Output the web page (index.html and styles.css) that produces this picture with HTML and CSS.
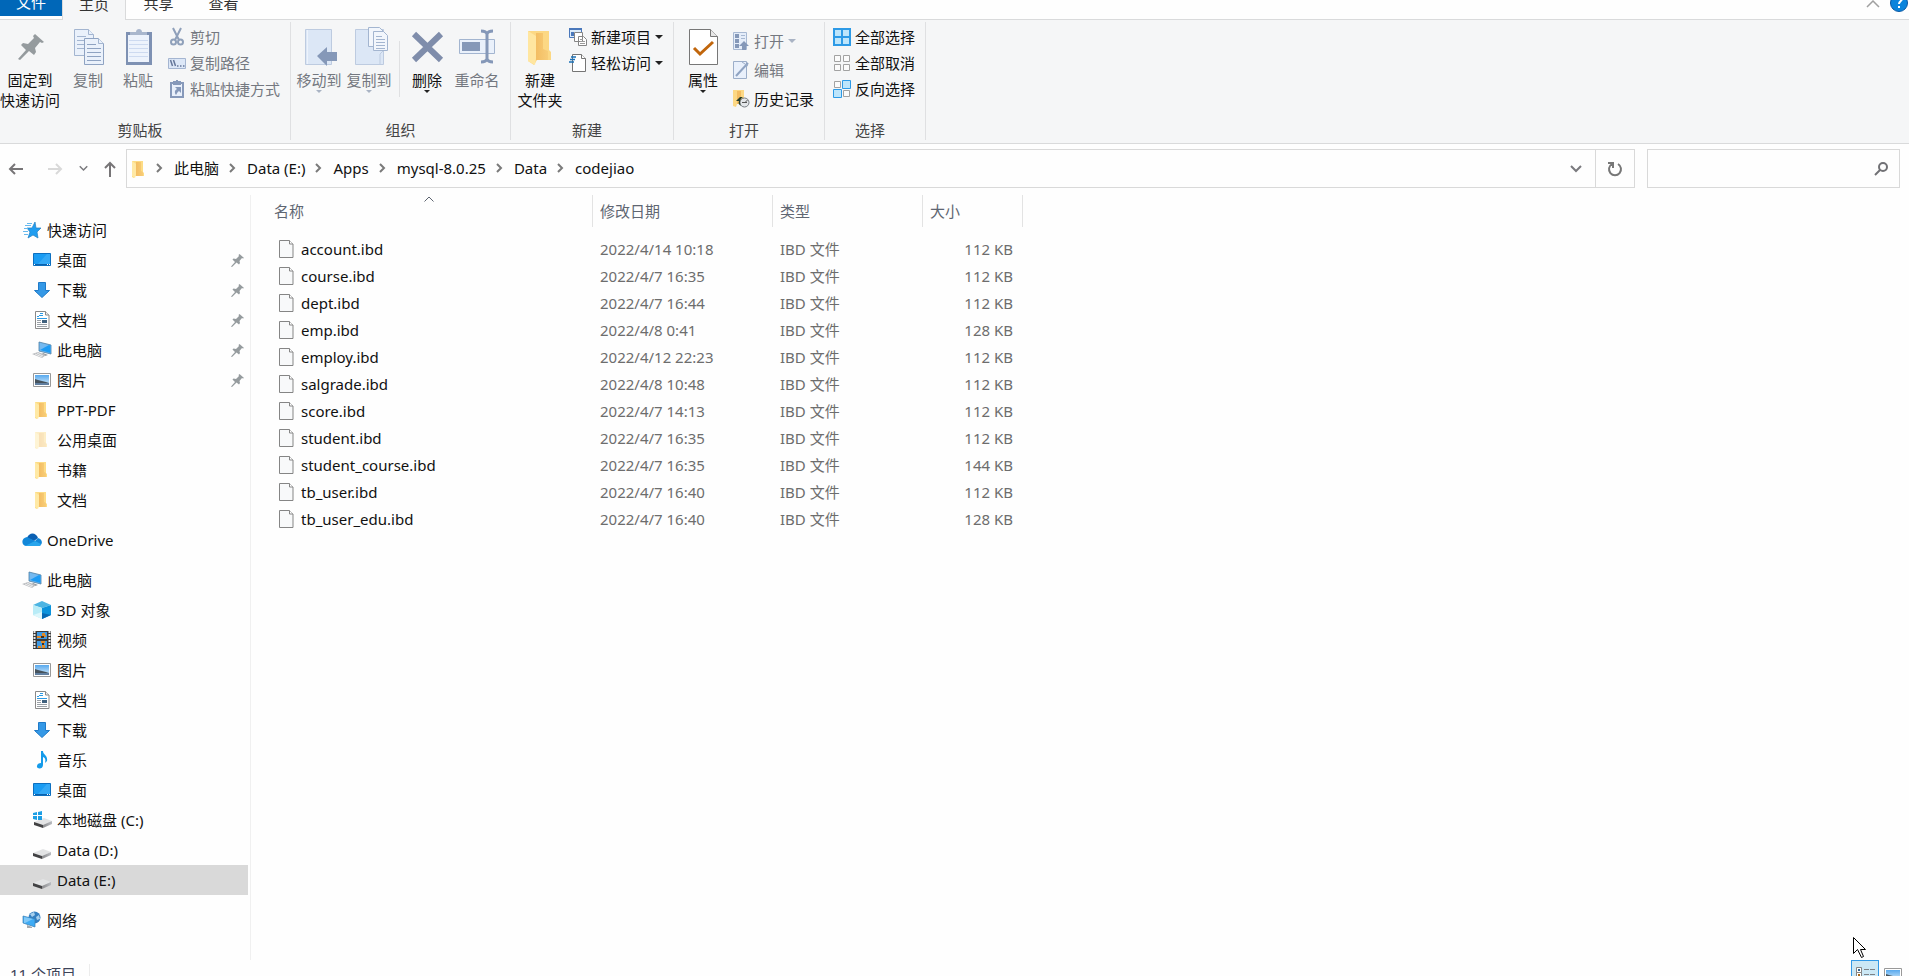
FILE: index.html
```html
<!DOCTYPE html>
<html lang="zh-CN">
<head>
    <meta charset="UTF-8">
    <meta name="viewport" content="width=device-width, initial-scale=1.0">
    <title>codejiao</title>
    <link rel="stylesheet" href="styles.css">
</head>
<body>
    <!-- shared icons -->
    <svg class="sprite" aria-hidden="true">
        <defs>
            <linearGradient id="g-gold" x1="0" x2="1"><stop offset="0" stop-color="#f3bd62"/><stop offset="1" stop-color="#f8cd78"/></linearGradient>
            <linearGradient id="g-sky" x1="0" y1="0" x2="0" y2="1"><stop offset="0" stop-color="#58a9ee"/><stop offset="1" stop-color="#d6ecfb"/></linearGradient>
            <linearGradient id="g-drive" x1="0" x2="1"><stop offset="0" stop-color="#8b8b8d"/><stop offset="1" stop-color="#b9bcc1"/></linearGradient>
        </defs>
        <symbol id="i-pin" viewBox="0 0 26 26">
            <path fill="#959b9e" d="M17 0l9 8-2 1-2-1-5 6 1 4-2 3-5-4L2 26l-2-1 8-9-5-5 2-2 5 1 6-6-1-2z"/>
        </symbol>
        <symbol id="i-folder" viewBox="0 0 18 18">
            <path fill="#fddc85" d="M2 1h11v11l1 1v3H5l-1 2-2-1z"/>
            <path fill="url(#g-gold)" d="M6 2h5v9l2 1v4H6z"/>
            <path fill="#ffe9a5" d="M2 1l4 3v11l-1 3-3-2z"/>
        </symbol>
        <symbol id="i-chev" viewBox="0 0 10 10">
            <path fill="none" stroke="#7a7a7a" stroke-width="2" d="M3 1l4 4-4 4"/>
        </symbol>
        <symbol id="i-down" viewBox="0 0 12 12">
            <path fill="none" stroke="#7a7a7e" stroke-width="2" d="M1 3l5 5 5-5"/>
        </symbol>
        <symbol id="i-file" viewBox="0 0 15 18">
            <path fill="#f8f9fa" stroke="#858585" d="M.5 .5h10l3.500 3.500v13.500H.5z"/>
            <path fill="#fff" stroke="#858585" d="M10.500 .5v3.500h3.500"/>
        </symbol>
        <symbol id="i-desktop" viewBox="0 0 18 18">
            <path fill="#1a9cf3" stroke="#0d6fbf" d="M.5 2.500h17v12H.5z"/>
            <path fill="#35a9f6" d="M4 14L14 3h3v11z"/>
            <path fill="#0a61ad" d="M1 13h16v1H1z"/>
            <path fill="#fff" d="M1 13h1v1H1zM14 13h1v1h-1zM16 13h1v1h-1z"/>
        </symbol>
        <symbol id="i-download" viewBox="0 0 18 18">
            <path fill="#3498e6" stroke="#1f7ac8" d="M5.500 1.500h7v8h4L9 16.500 1.500 9.500h4z"/>
        </symbol>
        <symbol id="i-doc" viewBox="0 0 18 18">
            <path fill="#fff" stroke="#8a8a8a" d="M2.500 .5h10l3.500 3.500v13.500H2.500z"/>
            <path fill="#eee" stroke="#8a8a8a" d="M12.500 .5v3.500h3.500"/>
            <path stroke="#2b9be6" d="M7 2.500h3M6 4.500h4M4 5.500h2M4 7.500h10"/>
            <path stroke="#9aa0a6" d="M4 9.500h4M4 11.500h4M4 13.500h10M4 15.500h10"/>
            <path fill="#41627f" d="M9 9h5v3H9z"/>
        </symbol>
        <symbol id="i-pc" viewBox="0 0 20 18">
            <path fill="#74b9f0" stroke="#4d7fa5" stroke-width=".8" d="M7 1l12 3v9L7 10z"/>
            <path fill="#1d9bf4" d="M8 9l9-5 1.500 .5v7.500z"/>
            <path fill="#8b9299" d="M11 12l5 2-3 1-3-2z"/>
            <path fill="#b9bcc0" d="M0 13l6-2 8 3-4 3z"/>
            <path stroke="#eee" d="M3 13l7 3M5 12l6 3"/>
        </symbol>
        <symbol id="i-picture" viewBox="0 0 18 18">
            <path fill="#fff" stroke="#999" d="M.5 2.500h17v13H.5z"/>
            <path fill="url(#g-sky)" d="M2 4h14v10H2z"/>
            <path fill="#46535d" d="M2 8l3 1 4 1 4 1 3 1v1H2z"/>
            <path fill="#607fa0" d="M2 12h14v2H2z"/>
        </symbol>
        <symbol id="i-cube" viewBox="0 0 18 18">
            <path fill="#4cb4e2" d="M0 4l9-4 9 4-9 3z"/>
            <path fill="#b9ecf7" d="M0 4l9 3v11l-9-4z"/>
            <path fill="#0b93dc" d="M18 4L9 7v11l9-4z"/>
            <path fill="#0569b4" d="M9 12l9 2-9 4z"/>
            <path fill="#def7fb" d="M0 14l9-3v7z"/>
        </symbol>
        <symbol id="i-video" viewBox="0 0 18 18">
            <path fill="#3b3b3b" d="M0 0h18v18H0z"/>
            <path stroke="#e8e8e8" stroke-width="2" stroke-dasharray="2 1" d="M1.500 0v18M16.500 0v18"/>
            <path fill="#3f9ae5" d="M4 1h10v7H4zM4 10h10v7H4z"/>
            <path fill="#e28a26" d="M9 2h3v2h1v2H9zM4 5h4v2H4zM8 10h4v2H8zM5 15h3v2H5zM9 14h3v3H9z"/>
            <path fill="#3b3027" d="M8 5h3v2H8zM9 12h2v2H9z"/>
        </symbol>
        <symbol id="i-music" viewBox="0 0 18 18">
            <path fill="#159bea" d="M8 0h2c0 4 5 4 4 10l-2 2c1-4 0-5-2-6v8c0 5-7 4-6 1 0-2 2-3 4-3z"/>
        </symbol>
        <symbol id="i-drive" viewBox="0 0 18 18">
            <path fill="#e3e4e5" d="M0 12l10-4 8 3-9 4z"/>
            <path fill="#424244" d="M0 12l9 3v3l-9-3z"/>
            <path fill="url(#g-drive)" d="M9 15l9-4v3l-9 4z"/>
        </symbol>
        <symbol id="i-osdrive" viewBox="0 0 20 18">
            <path fill="#e3e4e5" d="M2 11l10-4 8 3-9 5z"/>
            <path fill="#424244" d="M2 11l9 3v3l-9-3z"/>
            <path fill="url(#g-drive)" d="M11 14l9-4v3l-9 4z"/>
            <path fill="#1b9ee5" d="M1 2l4-1v3H1zM6 1l4-1v4H6zM1 5h4v4l-4-1zM6 5h4v4H6z"/>
        </symbol>
        <symbol id="i-star" viewBox="0 0 20 18">
            <path fill="#209df0" stroke="#2380c1" stroke-width=".7" d="M13 1l1 6h5l-4 4 1 6-5-3-5 3 2-6-3-4h5z"/>
            <path stroke="#67b9ee" d="M5 2.500h5M3 4.500h6M2 7.500h4M1 10.500h5M2 13.500h4"/>
        </symbol>
        <symbol id="i-cloud" viewBox="0 0 20 14">
            <path fill="#0a5fb2" d="M5 5c2-6 9-6 11 0l-4 3z"/>
            <path fill="#1287d9" d="M4 13C-1 12-1 5 5 4l8 4 3-3c5 1 5 7 1 8z"/>
            <path fill="#28a5ec" d="M3 13l10-5 6 3c0 1-1 2-2 2z"/>
        </symbol>
        <symbol id="i-network" viewBox="0 0 18 18">
            <circle cx="11.500" cy="6.500" r="6" fill="#347fc1"/>
            <path fill="#a7d0ee" d="M7 3l4-2 1 3-3 2zM13 6l3-2 1 4-3 1z"/>
            <path fill="#3dabf5" stroke="#3b7fb5" stroke-width=".7" d="M0 5l12 3v8L0 12z"/>
            <path fill="#81c8f7" d="M1 6l9 2-8 4H1z"/>
            <path fill="#a3a9ae" d="M4 14l5 2v1H4z"/>
        </symbol>
    </svg>

    <div class="window">
        <header class="tabs">
            <button class="tab tab-file">文件</button>
            <button class="tab tab-active">主页</button>
            <button class="tab">共享</button>
            <button class="tab">查看</button>
            <div class="tab-tools">
                <button aria-label="最小化功能区">
                    <svg width="14" height="10" viewBox="0 0 14 10"><path fill="none" stroke="#a0a0a0" stroke-width="1.500" d="M1 9l6-6 6 6"/></svg>
                </button>
                <button aria-label="帮助">
                    <svg width="18" height="18" viewBox="0 0 18 18"><circle cx="9" cy="9" r="8.500" fill="#0a84dc" stroke="#0757a4"/><path fill="none" stroke="#fff" stroke-width="2" d="M6 6c0-4 6-4 6-1 0 2-3 2-3 5"/><path fill="#fff" d="M8 12h2v2H8z"/></svg>
                </button>
            </div>
        </header>

        <section class="ribbon">
            <div class="group">
                <div class="tools">
                    <button class="big w60">
                        <svg width="36" height="38" viewBox="0 0 36 38"><use href="#i-pin" x="6" y="6" width="26" height="26"/></svg>
                        <span>固定到<br>快速访问</span>
                    </button>
                    <button class="big w56" disabled>
                        <svg width="36" height="38" viewBox="0 0 36 38">
                            <g fill="#eaf1fb" stroke="#a3b5d0">
                                <path d="M4.500 1.500h14l5 5v21h-19z"/><path d="M18.500 1.500v5h5"/>
                                <path d="M7 8.500h9M7 12.500h9M7 16.500h9M7 20.500h9"/>
                                <path stroke="#8fa3c2" d="M14.500 10.500h14l5 5v21h-19z"/><path d="M28.500 10.500v5h5"/>
                                <path stroke="#8fa3c2" d="M17 16.500h9M17 20.500h14M17 24.500h14M17 28.500h14M17 32.500h14"/>
                            </g>
                        </svg>
                        <span>复制</span>
                    </button>
                    <button class="big w44" disabled>
                        <svg width="36" height="38" viewBox="0 0 36 38">
                            <path fill="#7e91b3" d="M6 4h26v33H6z"/><path fill="#edf3fc" d="M8 7h21v27H8z"/>
                            <path stroke="#cddaf0" d="M9 12.500h19M9 16.500h19M9 20.500h19M9 24.500h19M9 28.500h19"/>
                            <path fill="#a9b7cd" d="M10 4h6c0-4 6-4 6 0h5v3H10z"/>
                        </svg>
                        <span>粘贴</span>
                    </button>
                    <div class="small-list indent">
                        <button class="small" disabled>
                            <svg width="18" height="18" viewBox="0 0 18 18"><path fill="none" stroke="#8fa0ba" stroke-width="2" d="M5 0l6 12M13 0L7 12"/><circle cx="5.500" cy="14" r="2.500" fill="none" stroke="#8fa0ba" stroke-width="2"/><circle cx="12.500" cy="14" r="2.500" fill="none" stroke="#8fa0ba" stroke-width="2"/></svg>
                            剪切
                        </button>
                        <button class="small" disabled>
                            <svg width="18" height="18" viewBox="0 0 18 18"><path fill="#dce7f7" stroke="#a4b5d1" d="M.5 4.500h17v10H.5z"/><path stroke="#65779a" stroke-width="1.500" d="M2.500 6l2 6M5.500 6l2 6M9 12h1.500M12 12h1.500M15 12h1.500"/></svg>
                            复制路径
                        </button>
                        <button class="small" disabled>
                            <svg width="18" height="18" viewBox="0 0 18 18"><path fill="#e9f0fb" stroke="#8699ba" stroke-width="2" d="M3 3h12v14H3z"/><path fill="#8699ba" d="M5 1h8v4H5zM8 0h2v1H8zM7 7h6v6l-2-2c-2 1-2 3-3 4-2-3-1-5 1-6z"/></svg>
                            粘贴快捷方式
                        </button>
                    </div>
                </div>
                <h2>剪贴板</h2>
            </div>

            <div class="group group-organize">
                <div class="tools">
                    <button class="big w50" disabled>
                        <svg width="36" height="38" viewBox="0 0 36 38"><path fill="#dce7f6" stroke="#bdcbe0" d="M4.500 1.500h26v35h-26z"/><path stroke="#edf3fc" d="M6.500 2v34"/><path fill="#8598b8" d="M16 28l10-9v5h10v9H26v5z"/></svg>
                        <span>移动到</span><i class="caret"></i>
                    </button>
                    <button class="big w50" disabled>
                        <svg width="36" height="38" viewBox="0 0 36 38"><path fill="#dce7f6" stroke="#bdcbe0" d="M4.500 1.500h28v35h-28zM29 36V26l3-3"/><g fill="#f2f6fc" stroke="#a3b5d0"><path d="M17.500 -.5h11l4 4v15h-15z"/><path d="M22.500 3.500h10l4 4v15h-14z"/><path d="M25 8.500h6M25 11.500h9M25 14.500h9M25 17.500h9M25 20.500h9"/></g></svg>
                        <span>复制到</span><i class="caret"></i>
                    </button>
                    <div class="split"></div>
                    <button class="big w40">
                        <svg width="36" height="38" viewBox="0 0 36 38"><path fill="none" stroke="#7f8dab" stroke-width="6" d="M5 6l27 26M32 6L5 32"/></svg>
                        <span>删除</span><i class="caret"></i>
                    </button>
                    <button class="big w60" disabled>
                        <svg width="36" height="38" viewBox="0 0 36 38"><path fill="#eaf1fb" stroke="#a3b5d0" d="M.5 11.500h35v14H.5z"/><path fill="#8598b8" d="M3 14h18v9H3z"/><path fill="none" stroke="#8598b8" stroke-width="3" d="M28 5v27M22 3q5 0 6 3 1-3 6-3M22 34q5 0 6-3 1 3 6 3"/></svg>
                        <span>重命名</span>
                    </button>
                </div>
                <h2>组织</h2>
            </div>

            <div class="group">
                <div class="tools">
                    <button class="big w58">
                        <svg width="36" height="38" viewBox="0 0 36 38"><path fill="#fcd884" d="M6 3h21v19l2 2v8H15l-3 5-6-4z"/><path fill="url(#g-gold)" d="M14 5h7v16l5 2v9H14z"/><path fill="#ffe6a0" d="M6 3l8 5v22l-1 7-7-4z"/></svg>
                        <span>新建<br>文件夹</span>
                    </button>
                    <div class="small-list">
                        <button class="small">
                            <svg width="18" height="18" viewBox="0 0 18 18"><path fill="#dcecfb" stroke="#4a78bb" d="M.5 .5h12v9H.5z"/><path fill="#4a78bb" d="M0 0h13v2H0zM2 4h3v4H2z"/><path fill="#fff" stroke="#858585" d="M5.500 4.500h8v9h-8zM9.500 8.500h5l3 3v6h-8z"/><path stroke="#9b9b9b" d="M11 11.500h3M11 13.500h5M11 15.500h5"/></svg>
                            新建项目<i class="caret"></i>
                        </button>
                        <button class="small">
                            <svg width="18" height="18" viewBox="0 0 18 18"><path fill="#fff" stroke="#757575" d="M3.500 .5h9l4 4v13h-13z"/><path fill="#fff" stroke="#757575" d="M12.500 .5v4h4"/><path stroke="#1b71b8" stroke-width="1.500" d="M2 3h5M1 5.500h5M0 8h5"/></svg>
                            轻松访问<i class="caret"></i>
                        </button>
                    </div>
                </div>
                <h2>新建</h2>
            </div>

            <div class="group">
                <div class="tools">
                    <button class="big w58">
                        <svg width="36" height="38" viewBox="0 0 36 38"><path fill="#fff" stroke="#777" d="M4.500 1.500h21l7 7v28h-28z"/><path fill="#e7e7e7" stroke="#777" d="M25.500 1.500v7h7"/><path fill="none" stroke="#c1660c" stroke-width="3" d="M9 20l6 6 13-12"/></svg>
                        <span>属性</span><i class="caret"></i>
                    </button>
                    <div class="small-list loose">
                        <button class="small" disabled>
                            <svg width="18" height="18" viewBox="0 0 18 18"><path fill="#e5edf9" stroke="#a7b8d2" d="M1.500 .5h13v17h-13z"/><path fill="#8598b8" d="M3 2h4v4H3zM3 7h4v4H3zM3 12h4v4H3zM7 14l5-5 5 5h-3v4h-4v-4z"/><path stroke="#a7b8d2" d="M9 3.500h4M9 6.500h4"/></svg>
                            打开<i class="caret"></i>
                        </button>
                        <button class="small" disabled>
                            <svg width="18" height="18" viewBox="0 0 18 18"><path fill="#e9f0fb" stroke="#9caec9" d="M1.500 .5h13v17h-13z"/><path stroke="#8fa3c2" stroke-width="2" d="M4 15L16 2"/><path stroke="#9caec9" d="M10 1l6 4"/></svg>
                            编辑
                        </button>
                        <button class="small">
                            <svg width="18" height="18" viewBox="0 0 18 18"><path fill="#fcd884" d="M1 0h11v14H5l-1 3-3-1z"/><path fill="#f3bd62" d="M5 1h4v13H5z"/><circle cx="12.500" cy="12.500" r="4.500" fill="#e3e6e9" stroke="#777d83"/><path fill="none" stroke="#555" d="M12.500 13l3-3M10 12.500h5"/><path fill="#263d2b" d="M11 7c-3 2-4 5-2 9-2-1-3-3-2-5H4l4-4z"/></svg>
                            历史记录
                        </button>
                    </div>
                </div>
                <h2>打开</h2>
            </div>

            <div class="group">
                <div class="tools">
                    <div class="small-list indent">
                        <button class="small">
                            <svg width="18" height="18" viewBox="0 0 18 18"><path fill="#bde5fb" stroke="#2d9ae6" stroke-width="2" d="M1 1h16v16H1zM9 1v16M1 9h16"/></svg>
                            全部选择
                        </button>
                        <button class="small">
                            <svg width="18" height="18" viewBox="0 0 18 18"><path fill="#fbfbfb" stroke="#a2a2a2" d="M1.500 1.500h6v6h-6zM10.500 1.500h6v6h-6zM1.500 10.500h6v6h-6zM10.500 10.500h6v6h-6z"/></svg>
                            全部取消
                        </button>
                        <button class="small">
                            <svg width="18" height="18" viewBox="0 0 18 18"><path fill="#fbfbfb" stroke="#a2a2a2" d="M1.500 1.500h6v6h-6zM10.500 10.500h6v6h-6z"/><path fill="#bde5fb" stroke="#2d9ae6" d="M9.500 .5h8v8h-8zM.5 9.500h8v8h-8z"/></svg>
                            反向选择
                        </button>
                    </div>
                </div>
                <h2>选择</h2>
            </div>
        </section>

        <nav class="address-row">
            <div class="history">
                <button aria-label="返回"><svg width="16" height="12" viewBox="0 0 16 12"><path fill="none" stroke="#777577" stroke-width="2" d="M15 6H2M7 1L2 6l5 5"/></svg></button>
                <button aria-label="前进"><svg width="16" height="12" viewBox="0 0 16 12"><path fill="none" stroke="#d9d9d9" stroke-width="2" d="M1 6h13M9 1l5 5-5 5"/></svg></button>
                <button aria-label="最近位置"><svg width="9" height="9"><use href="#i-down"/></svg></button>
                <button aria-label="向上"><svg width="12" height="16" viewBox="0 0 12 16"><path fill="none" stroke="#777577" stroke-width="2" d="M6 16V2M1 7l5-5 5 5"/></svg></button>
            </div>
            <div class="address">
                <svg class="address-icon" width="16" height="18" viewBox="0 0 16 18"><use href="#i-folder" width="18" height="18"/></svg>
                <ol class="crumbs">
                    <li><svg width="10" height="10"><use href="#i-chev"/></svg><a href="#">此电脑</a></li>
                    <li><svg width="10" height="10"><use href="#i-chev"/></svg><a href="#">Data (E:)</a></li>
                    <li><svg width="10" height="10"><use href="#i-chev"/></svg><a href="#">Apps</a></li>
                    <li><svg width="10" height="10"><use href="#i-chev"/></svg><a href="#">mysql-8.0.25</a></li>
                    <li><svg width="10" height="10"><use href="#i-chev"/></svg><a href="#">Data</a></li>
                    <li><svg width="10" height="10"><use href="#i-chev"/></svg><a href="#">codejiao</a></li>
                </ol>
                <button class="address-btn" aria-label="以前的位置"><svg width="12" height="12"><use href="#i-down"/></svg></button>
                <button class="address-btn refresh" aria-label="刷新"><svg width="16" height="16" viewBox="0 0 16 16"><path fill="none" stroke="#777" stroke-width="2" d="M11 3a6 6 0 1 1-6 0M1 2h5v5"/></svg></button>
            </div>
            <div class="search">
                <input type="search" aria-label="搜索">
                <svg width="14" height="14" viewBox="0 0 14 14"><circle cx="9" cy="5" r="4" fill="none" stroke="#717175" stroke-width="2"/><path stroke="#717175" stroke-width="2" d="M6 8l-5 5"/></svg>
            </div>
        </nav>

        <main class="main">
            <aside class="sidebar">
                <section>
                    <a class="root" href="#"><svg width="20" height="18"><use href="#i-star"/></svg>快速访问</a>
                    <a href="#"><svg width="20" height="18"><use href="#i-desktop"/></svg>桌面<svg class="pinned" width="13" height="13"><use href="#i-pin"/></svg></a>
                    <a href="#"><svg width="20" height="18"><use href="#i-download"/></svg>下载<svg class="pinned" width="13" height="13"><use href="#i-pin"/></svg></a>
                    <a href="#"><svg width="20" height="18"><use href="#i-doc"/></svg>文档<svg class="pinned" width="13" height="13"><use href="#i-pin"/></svg></a>
                    <a href="#"><svg width="20" height="18"><use href="#i-pc"/></svg>此电脑<svg class="pinned" width="13" height="13"><use href="#i-pin"/></svg></a>
                    <a href="#"><svg width="20" height="18"><use href="#i-picture"/></svg>图片<svg class="pinned" width="13" height="13"><use href="#i-pin"/></svg></a>
                    <a href="#"><svg width="20" height="18"><use href="#i-folder"/></svg>PPT-PDF</a>
                    <a href="#"><svg class="faded" width="20" height="18"><use href="#i-folder"/></svg>公用桌面</a>
                    <a href="#"><svg width="20" height="18"><use href="#i-folder"/></svg>书籍</a>
                    <a href="#"><svg width="20" height="18"><use href="#i-folder"/></svg>文档</a>
                </section>
                <section>
                    <a class="root" href="#"><svg width="20" height="14"><use href="#i-cloud"/></svg>OneDrive</a>
                </section>
                <section>
                    <a class="root" href="#"><svg width="20" height="18"><use href="#i-pc"/></svg>此电脑</a>
                    <a href="#"><svg width="20" height="18"><use href="#i-cube"/></svg>3D 对象</a>
                    <a href="#"><svg width="20" height="18"><use href="#i-video"/></svg>视频</a>
                    <a href="#"><svg width="20" height="18"><use href="#i-picture"/></svg>图片</a>
                    <a href="#"><svg width="20" height="18"><use href="#i-doc"/></svg>文档</a>
                    <a href="#"><svg width="20" height="18"><use href="#i-download"/></svg>下载</a>
                    <a href="#"><svg width="20" height="18"><use href="#i-music"/></svg>音乐</a>
                    <a href="#"><svg width="20" height="18"><use href="#i-desktop"/></svg>桌面</a>
                    <a href="#"><svg width="20" height="18"><use href="#i-osdrive"/></svg>本地磁盘 (C:)</a>
                    <a href="#"><svg width="20" height="18"><use href="#i-drive"/></svg>Data (D:)</a>
                    <a class="selected" href="#"><svg width="20" height="18"><use href="#i-drive"/></svg>Data (E:)</a>
                </section>
                <section>
                    <a class="root" href="#"><svg width="20" height="18"><use href="#i-network"/></svg>网络</a>
                </section>
            </aside>

            <div class="files">
                <table>
                    <colgroup><col class="col-name"><col class="col-date"><col class="col-type"><col class="col-size"></colgroup>
                    <thead>
                        <tr>
                            <th>名称<svg class="sort" width="10" height="6" viewBox="0 0 10 6"><path fill="none" stroke="#5d6470" d="M.5 5.500L5 1l4.500 4.500"/></svg></th>
                            <th>修改日期</th>
                            <th>类型</th>
                            <th>大小</th>
                        </tr>
                    </thead>
                    <tbody>
                        <tr><td><svg width="15" height="18"><use href="#i-file"/></svg>account.ibd</td><td>2022/4/14 10:18</td><td>IBD 文件</td><td>112 KB</td></tr>
                        <tr><td><svg width="15" height="18"><use href="#i-file"/></svg>course.ibd</td><td>2022/4/7 16:35</td><td>IBD 文件</td><td>112 KB</td></tr>
                        <tr><td><svg width="15" height="18"><use href="#i-file"/></svg>dept.ibd</td><td>2022/4/7 16:44</td><td>IBD 文件</td><td>112 KB</td></tr>
                        <tr><td><svg width="15" height="18"><use href="#i-file"/></svg>emp.ibd</td><td>2022/4/8 0:41</td><td>IBD 文件</td><td>128 KB</td></tr>
                        <tr><td><svg width="15" height="18"><use href="#i-file"/></svg>employ.ibd</td><td>2022/4/12 22:23</td><td>IBD 文件</td><td>112 KB</td></tr>
                        <tr><td><svg width="15" height="18"><use href="#i-file"/></svg>salgrade.ibd</td><td>2022/4/8 10:48</td><td>IBD 文件</td><td>112 KB</td></tr>
                        <tr><td><svg width="15" height="18"><use href="#i-file"/></svg>score.ibd</td><td>2022/4/7 14:13</td><td>IBD 文件</td><td>112 KB</td></tr>
                        <tr><td><svg width="15" height="18"><use href="#i-file"/></svg>student.ibd</td><td>2022/4/7 16:35</td><td>IBD 文件</td><td>112 KB</td></tr>
                        <tr><td><svg width="15" height="18"><use href="#i-file"/></svg>student_course.ibd</td><td>2022/4/7 16:35</td><td>IBD 文件</td><td>144 KB</td></tr>
                        <tr><td><svg width="15" height="18"><use href="#i-file"/></svg>tb_user.ibd</td><td>2022/4/7 16:40</td><td>IBD 文件</td><td>112 KB</td></tr>
                        <tr><td><svg width="15" height="18"><use href="#i-file"/></svg>tb_user_edu.ibd</td><td>2022/4/7 16:40</td><td>IBD 文件</td><td>128 KB</td></tr>
                    </tbody>
                </table>
            </div>
        </main>

        <footer class="status">
            <span class="count">11 个项目</span>
            <div class="views">
                <button class="view view-on" aria-label="详细信息">
                    <svg width="20" height="20" viewBox="0 0 20 20"><path fill="#fff" stroke="#858585" d="M1.500 .5h5v5h-5zM1.500 5.500h5v5h-5zM1.500 10.500h5v5h-5z"/><path fill="#33658f" d="M3 2h2v2H3zM3 12h2v2H3z"/><path fill="#a9691b" d="M3 7h2v2H3z"/><path stroke="#7d8185" d="M9 2.500h5M15 2.500h5M9 7.500h5M15 7.500h5M9 12.500h5M15 12.500h5"/></svg>
                </button>
                <button class="view" aria-label="大图标">
                    <svg width="18" height="18"><use href="#i-picture"/></svg>
                </button>
            </div>
        </footer>

        <svg class="pointer" width="13" height="22" viewBox="0 0 13 22"><path fill="#fff" stroke="#000" d="M.5 .5v16l4-4 4 8 2-1-3-7h5z"/></svg>
    </div>
</body>
</html>
```

FILE: styles.css
```css
* {
    box-sizing: border-box;
}

body {
    margin: 0;
    font-family: "Noto Sans", "Noto Sans CJK SC", sans-serif;
    font-size: 15px;
    line-height: 20px;
    color: #111;
    background: #fefefe;
}

button {
    padding: 0;
    border: 0;
    background: none;
    font: inherit;
    color: inherit;
}

a {
    color: inherit;
    text-decoration: none;
}

svg {
    flex: none;
    overflow: visible;
}

.sprite {
    position: absolute;
    width: 0;
    height: 0;
}

.window {
    position: relative;
    display: flex;
    flex-direction: column;
    height: 100vh;
    overflow: hidden;
}

/* tabs, scrolled partly out of the top */
.tabs {
    display: flex;
    align-items: flex-end;
    height: 20px;
    border-bottom: 1px solid #d9dadb;
}

.tab {
    width: 65px;
    height: 32px;
    color: #333;
}

.tab-file {
    width: 62px;
    height: 29px;
    margin-bottom: 3px;
    background: #0067b8;
    color: #fff;
}

.tab-active {
    width: 64px;
    height: 33px;
    margin-bottom: -1px;
    border: 1px solid #d9dadb;
    border-bottom: 0;
    background: #f5f6f7;
}

.tab-tools {
    display: flex;
    align-items: flex-end;
    gap: 10px;
    margin-left: auto;
    padding: 0 1px 7px 0;
}

.tab-tools button {
    display: flex;
    height: 18px;
    align-items: center;
}

/* ribbon */
.ribbon {
    display: flex;
    flex: none;
    height: 124px;
    padding: 2px 0 3px;
    background: #f5f6f7;
    border-bottom: 1px solid #d9dadb;
}

.group {
    display: flex;
    flex-direction: column;
    justify-content: space-between;
    padding-right: 10px;
    border-right: 1px solid #dfe0e2;
}

.group h2 {
    margin: 0;
    font-size: 15px;
    font-weight: 400;
    text-align: center;
    color: #444;
}

.group-organize {
    padding: 0 3px;
}

.tools {
    display: flex;
    align-items: flex-start;
}

.big {
    display: flex;
    flex-direction: column;
    align-items: center;
    padding-top: 6px;
    white-space: nowrap;
}

.big svg {
    margin-bottom: 4px;
}

.w40 { width: 40px; }
.w44 { width: 44px; }
.w50 { width: 50px; }
.w56 { width: 56px; }
.w58 { width: 58px; }
.w60 { width: 60px; }

button:disabled {
    color: #747880;
}

.caret {
    border: 3px solid transparent;
    border-top-color: #222;
    border-bottom: 0;
}

button:disabled .caret {
    border-top-color: #a9b3c4;
}

.split {
    height: 56px;
    margin: 19px 7px 0 5px;
    border-left: 1px solid #dfe0e2;
}

.small-list {
    display: flex;
    flex-direction: column;
    padding-top: 2px;
}

.indent {
    padding-left: 8px;
}

.small {
    display: flex;
    align-items: center;
    gap: 4px;
    height: 26px;
}

.small .caret {
    border-width: 4px 4px 0;
}

.loose {
    padding-top: 4px;
}

.loose .small {
    height: 29px;
}

/* address bar */
.address-row {
    display: flex;
    flex: none;
    height: 51px;
    padding: 5px 9px 7px 8px;
}

.history {
    display: flex;
    align-items: center;
    gap: 16px;
    width: 118px;
}

.history button {
    display: flex;
}

.history button:nth-child(2) {
    margin-left: 7px;
}

.address {
    display: flex;
    flex: 1;
    align-items: center;
    border: 1px solid #d9d9d9;
}

.address-icon {
    margin-left: 3px;
}

.crumbs {
    display: flex;
    flex: 1;
    margin: 0;
    padding: 0 0 2px;
    list-style: none;
}

.crumbs li {
    display: flex;
    align-items: center;
}

.crumbs svg {
    margin: 0 10px 0 8px;
}

.address-btn {
    display: flex;
    align-items: center;
    justify-content: center;
    align-self: stretch;
    width: 38px;
}

.refresh {
    width: 39px;
    border-left: 1px solid #d9d9d9;
}

.search {
    display: flex;
    align-items: center;
    width: 253px;
    margin-left: 12px;
    padding-right: 11px;
    border: 1px solid #d9d9d9;
}

.search input {
    flex: 1;
    min-width: 0;
    height: 30px;
    border: 0;
    outline: 0;
    background: none;
    font: inherit;
}

/* folder tree */
.main {
    display: flex;
    flex: 1;
    min-height: 0;
}

.sidebar {
    width: 251px;
    padding: 20px 2px 0 0;
    border-right: 1px solid #f0f0f0;
}

.sidebar section {
    margin-bottom: 10px;
}

.sidebar a {
    display: flex;
    align-items: center;
    gap: 5px;
    height: 30px;
    padding: 0 4px 0 32px;
}

.sidebar .root {
    padding-left: 22px;
}

.sidebar .selected {
    background: #d9d9d9;
}

.pinned {
    margin-left: auto;
}

.faded {
    opacity: 0.45;
}

/* file list */
.files {
    flex: 1;
}

table {
    table-layout: fixed;
    width: 772px;
    border-spacing: 0;
}

.col-name { width: 342px; }
.col-date { width: 180px; }
.col-type { width: 150px; }
.col-size { width: 100px; }

th {
    position: relative;
    height: 32px;
    padding: 0 7px;
    border-right: 1px solid #e3e3e3;
    font-weight: 400;
    text-align: left;
    color: #5f6672;
}

th:first-child {
    padding-left: 23px;
}

.sort {
    position: absolute;
    top: 1px;
    left: 173px;
}

tbody::before {
    content: "";
    display: block;
    height: 8px;
}

td {
    height: 27px;
    padding: 0 7px;
    color: #6d6d6d;
}

td:first-child {
    padding-left: 28px;
    color: #111;
}

td:last-child {
    padding-right: 10px;
    text-align: right;
}

td svg {
    margin-right: 7px;
    vertical-align: -3px;
}

/* status bar, cut off by the bottom edge */
.status {
    display: flex;
    flex: none;
    justify-content: space-between;
    height: 16px;
    padding-left: 10px;
}

.count {
    height: 22px;
    margin-top: 4px;
    padding-right: 13px;
    border-right: 1px solid #ececec;
    color: #3d4459;
}

.views {
    display: flex;
    padding-right: 2px;
}

.view {
    display: flex;
    justify-content: center;
    width: 28px;
    height: 28px;
    padding-top: 6px;
}

.view-on {
    border: 1px solid #3399e6;
    background: #cce8f5;
}

.pointer {
    position: absolute;
    right: 43px;
    bottom: 17px;
}
```
